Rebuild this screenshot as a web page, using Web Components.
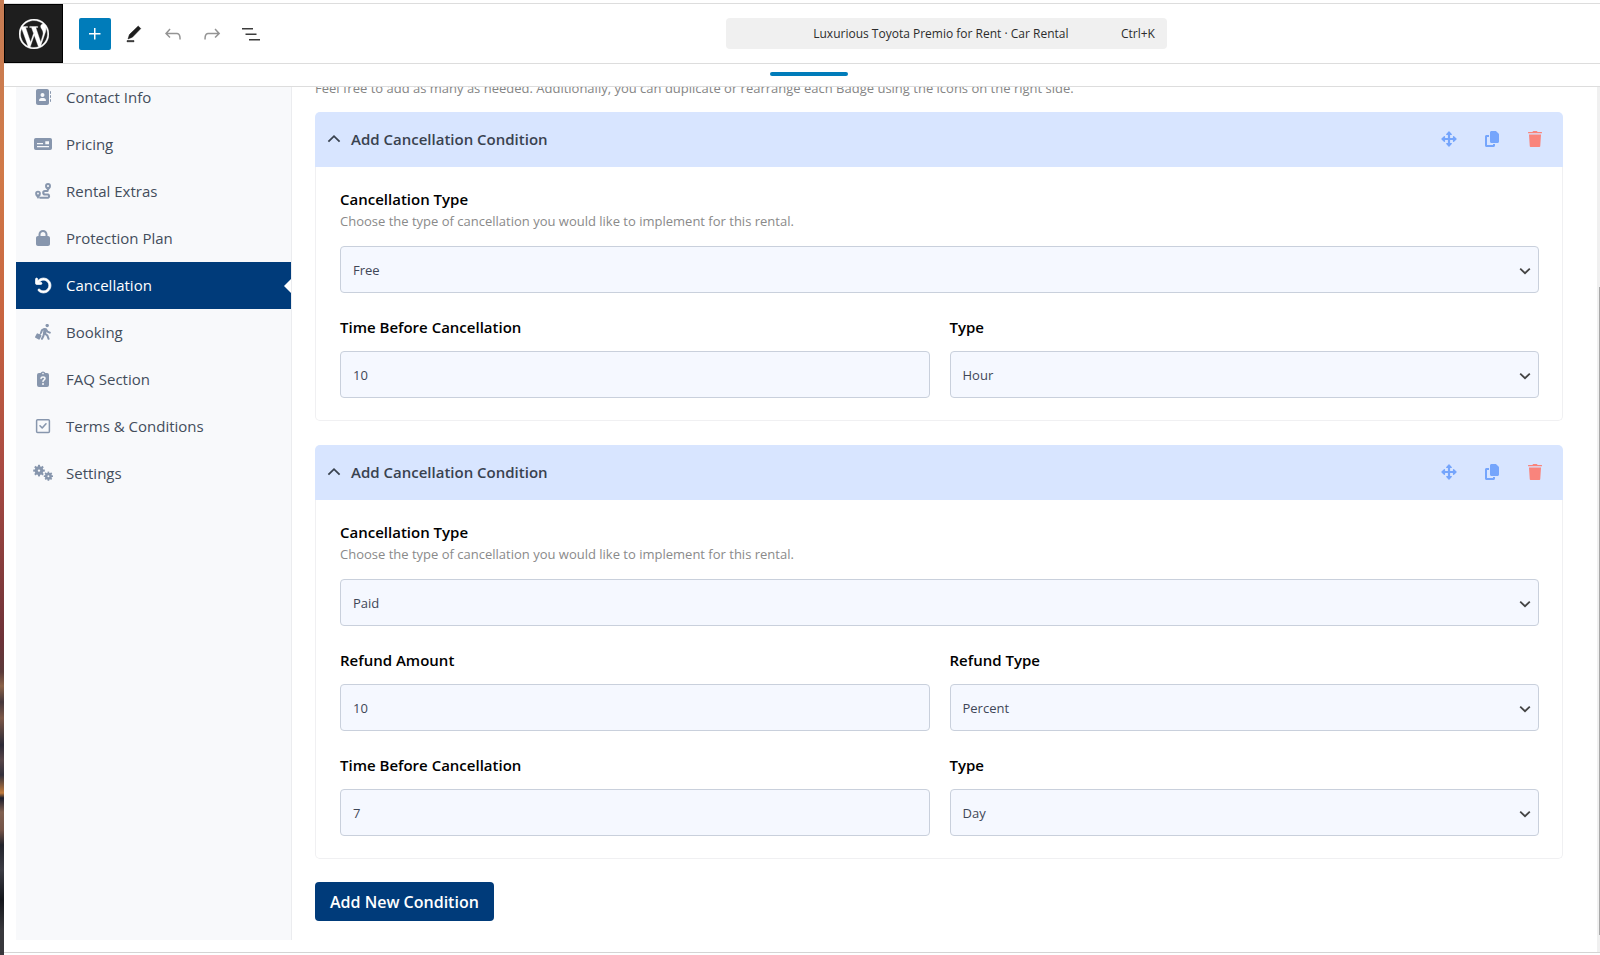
<!DOCTYPE html>
<html lang="en">
<head>
<meta charset="utf-8">
<title>Luxurious Toyota Premio for Rent</title>
<style>
  html, body { height: 100%; margin: 0; }
  body { font-family: "Open Sans", "Noto Sans", sans-serif; font-size: 13px; background: #fff; overflow: hidden; }
</style>
</head>
<body>
<editor-app>
  <editor-topbar slot="top" shortcut="Ctrl+K">Luxurious Toyota Premio for Rent · Car Rental</editor-topbar>
  <side-nav slot="nav">
    <nav-item icon="contact">Contact Info</nav-item>
    <nav-item icon="pricing">Pricing</nav-item>
    <nav-item icon="route">Rental Extras</nav-item>
    <nav-item icon="lock">Protection Plan</nav-item>
    <nav-item icon="undo" active>Cancellation</nav-item>
    <nav-item icon="walk">Booking</nav-item>
    <nav-item icon="faq">FAQ Section</nav-item>
    <nav-item icon="check">Terms &amp; Conditions</nav-item>
    <nav-item icon="gears">Settings</nav-item>
  </side-nav>
  <condition-list>
    <condition-card heading="Add Cancellation Condition">
      <form-field wide kind="select" label="Cancellation Type" value="Free" options="Free,Paid"
        hint="Choose the type of cancellation you would like to implement for this rental."></form-field>
      <form-field label="Time Before Cancellation" value="10"></form-field>
      <form-field kind="select" label="Type" value="Hour" options="Hour,Day"></form-field>
    </condition-card>
    <condition-card heading="Add Cancellation Condition">
      <form-field wide kind="select" label="Cancellation Type" value="Paid" options="Free,Paid"
        hint="Choose the type of cancellation you would like to implement for this rental."></form-field>
      <form-field label="Refund Amount" value="10"></form-field>
      <form-field kind="select" label="Refund Type" value="Percent" options="Percent,Fixed"></form-field>
      <form-field label="Time Before Cancellation" value="7"></form-field>
      <form-field kind="select" label="Type" value="Day" options="Hour,Day"></form-field>
    </condition-card>
  </condition-list>
</editor-app>

<script>
const svg = (box, size, body, extra = '') =>
  `<svg viewBox="${box}" width="${size}" height="${size}" aria-hidden="true" ${extra}>${body}</svg>`;

// Eight-toothed gear centred on cx, cy.
const gear = (cx, cy, r) => {
  let teeth = '';
  for (let a = 0; a < 360; a += 45)
    teeth += `<path d="M${cx} ${cy - r * .5}V${cy - r}" stroke="currentColor" stroke-width="${r * .36}" transform="rotate(${a} ${cx} ${cy})"/>`;
  return teeth + `<circle cx="${cx}" cy="${cy}" r="${r * .48}" fill="none" stroke="currentColor" stroke-width="${r * .54}"/>`;
};

const ICONS = {
  contact: svg('0 0 512 512', 16, '<path fill="currentColor" d="M96 0C60.7 0 32 28.7 32 64V448c0 35.3 28.7 64 64 64H384c35.3 0 64-28.7 64-64V64c0-35.3-28.7-64-64-64H96zM208 288h64c44.2 0 80 35.8 80 80c0 8.8-7.2 16-16 16H144c-8.8 0-16-7.2-16-16c0-44.2 35.8-80 80-80zm-32-96a64 64 0 1 1 128 0 64 64 0 1 1 -128 0zM512 80c0-8.8-7.2-16-16-16s-16 7.2-16 16v64c0 8.8 7.2 16 16 16s16-7.2 16-16V80zM496 192c-8.8 0-16 7.2-16 16v64c0 8.8 7.2 16 16 16s16-7.2 16-16V208c0-8.8-7.2-16-16-16zm16 144c0-8.8-7.2-16-16-16s-16 7.2-16 16v64c0 8.8 7.2 16 16 16s16-7.2 16-16V336z"/>'),
  pricing: svg('0 0 18 18', 18, '<path fill="currentColor" fill-rule="evenodd" d="M1.8 3H16.2A1.8 1.8 0 0 1 18 4.8V13.2A1.8 1.8 0 0 1 16.2 15H1.8A1.8 1.8 0 0 1 0 13.2V4.8A1.8 1.8 0 0 1 1.8 3ZM11.3 6.2V9.2H15V6.2ZM3 8V9.2H9V8ZM3 11V12.2H15V11Z"/>'),
  route: svg('0 0 512 512', 16, '<g fill="none" stroke="currentColor" stroke-width="62"><circle cx="416" cy="96" r="64"/><circle cx="96" cy="336" r="60"/><path stroke-width="68" stroke-linecap="round" d="M400 256H320a56 56 0 0 0 0 112H416a56 56 0 0 1 0 104H165"/></g><path fill="currentColor" d="M335 140L416 262 497 140 455 165H377ZM14 385L96 512 178 385 135 410H57Z"/>'),
  lock: svg('0 0 448 512', 16, '<path fill="currentColor" d="M144 144v48H304V144c0-44.2-35.8-80-80-80s-80 35.8-80 80zM80 192V144C80 64.5 144.5 0 224 0s144 64.5 144 144v48h16c35.3 0 64 28.7 64 64V448c0 35.3-28.7 64-64 64H64c-35.3 0-64-28.7-64-64V256c0-35.3 28.7-64 64-64H80z"/>'),
  undo: svg('0 0 512 512', 17, '<path fill="currentColor" stroke="currentColor" stroke-width="22" d="M125.7 160H176c17.7 0 32 14.3 32 32s-14.3 32-32 32H48c-17.7 0-32-14.3-32-32V64c0-17.7 14.3-32 32-32s32 14.3 32 32v51.2L97.6 97.6c87.5-87.5 229.3-87.5 316.8 0s87.5 229.3 0 316.8s-229.3 87.5-316.8 0c-12.5-12.5-12.5-32.8 0-45.3s32.8-12.5 45.3 0c62.5 62.5 163.8 62.5 226.3 0s62.5-163.8 0-226.3s-163.8-62.5-226.3 0L125.7 160z"/>'),
  walk: svg('0 0 16 16', 16, '<g fill="none" stroke="currentColor" stroke-linecap="round" stroke-linejoin="round"><path stroke-width="3.2" d="M10.2 5.9L9.6 8.8"/><path stroke-width="2" d="M9.8 9.4L12.4 11.6 13.6 14.8M9 9.6L8.4 12 7 14.8M9.4 5L7 6.2 6.2 8.4M11 5.4L12.4 7.6 14.8 8.6"/><path stroke-width="1.2" d="M6.2 8.6L4.6 11"/></g><circle cx="12.2" cy="1.6" r="1.7" fill="currentColor"/><rect x=".5" y="10" width="5.2" height="5" rx=".8" fill="currentColor" transform="rotate(28 3.2 12.7)"/>'),
  faq: svg('0 0 16 16', 16, '<path fill="currentColor" d="M4 2H5.6A2.6 2.6 0 0 1 10.4 2H12A2 2 0 0 1 14 4V14A2 2 0 0 1 12 16H4A2 2 0 0 1 2 14V4A2 2 0 0 1 4 2Z"/><circle cx="8" cy="2.6" r=".8" fill="#f8f9fb"/><path fill="none" stroke="#f8f9fb" stroke-width="1.5" stroke-linecap="round" d="M6 7.4C6.1 5.6 10 5.5 10 7.6 10 8.9 8 9 8 10.6"/><circle cx="8" cy="13" r="1" fill="#f8f9fb"/>'),
  check: svg('0 0 16 16', 16, '<g fill="none" stroke="currentColor" stroke-linecap="round" stroke-linejoin="round"><rect x="1.6" y="1.8" width="12.8" height="12.6" rx="1" stroke-width="1.5"/><path stroke-width="1.6" d="M5 7.8L7.2 10 11 5.8"/></g>'),
  gears: svg('0 0 20 16', 20, gear(6, 5.6, 5.8) + gear(15.4, 11.2, 4.6)),

  wordpress: svg('0 0 24 24', 30, '<path fill="#fff" d="M21.469 6.825c.84 1.537 1.318 3.3 1.318 5.175 0 3.979-2.156 7.456-5.363 9.325l3.295-9.527c.615-1.54.82-2.771.82-3.864 0-.405-.026-.78-.07-1.11m-7.981.105c.647-.03 1.232-.105 1.232-.105.582-.075.514-.93-.067-.899 0 0-1.755.135-2.88.135-1.064 0-2.85-.15-2.85-.15-.585-.03-.661.855-.075.885 0 0 .54.061 1.125.09l1.68 4.605-2.37 7.08L5.354 6.9c.649-.03 1.234-.1 1.234-.1.585-.075.516-.93-.065-.896 0 0-1.746.138-2.874.138-.2 0-.438-.008-.69-.015C4.911 3.15 8.235 1.215 12 1.215c2.809 0 5.365 1.072 7.286 2.833-.046-.003-.091-.009-.141-.009-1.06 0-1.812.923-1.812 1.914 0 .89.513 1.643 1.06 2.531.411.72.89 1.643.89 2.977 0 .915-.354 1.994-.821 3.479l-1.075 3.585-3.9-11.61.001.014zM12 22.784c-1.059 0-2.081-.153-3.048-.437l3.237-9.406 3.315 9.087c.024.053.05.101.078.149-1.12.393-2.325.609-3.582.609M1.211 12c0-1.564.336-3.05.935-4.39L7.29 21.709C3.694 19.96 1.212 16.271 1.211 12M12 0C5.385 0 0 5.385 0 12s5.385 12 12 12 12-5.385 12-12S18.615 0 12 0" stroke="#fff" stroke-width=".3"/>'),
  plus: svg('0 0 24 24', 24, '<path fill="#fff" d="M11 12.5V17.5H12.5V12.5H17.5V11H12.5V6H11V11H6V12.5H11Z"/>'),
  pencil: svg('0 0 24 24', 24, '<path fill="#1e1e1e" stroke="#1e1e1e" stroke-width=".5" d="M18.8 6.6L16.2 4 7.4 12.6 6 17 10.4 15.2ZM12 18.6H5V19.8H12Z"/>'),
  back: svg('0 0 24 24', 24, '<path fill="#949494" d="M18.3 11.7c-.6-.6-1.4-.9-2.3-.9H6.7l2.9-3.3-1.1-1-4.5 5L8.5 16l1-1-2.7-2.7H16c.5 0 .9.2 1.3.5 1 1 1 3.4 1 4.5v.3h1.5v-.2c0-1.5 0-4.3-1.5-5.7z"/>'),
  forward: svg('0 0 24 24', 24, '<path fill="#949494" d="M15.6 6.5l-1.1 1 2.9 3.3H8c-.9 0-1.7.3-2.3.9-1.4 1.5-1.4 4.2-1.4 5.6v.2h1.5v-.3c0-1.1 0-3.5 1-4.5.3-.3.7-.5 1.3-.5h9.2L14.5 15l1.1 1.1 4.6-4.6-4.6-5z"/>'),
  outline: svg('0 0 24 24', 24, '<path fill="#3c3c3c" d="M3 6h11v1.4H3V6Zm3.5 5.5h11v1.4h-11v-1.4ZM21 17H10v1.4h11V17Z"/>'),

  move: svg('0 0 16 16', 16, '<path stroke="currentColor" stroke-width="2.2" d="M8 3V13M3 8H13"/><path fill="currentColor" stroke="currentColor" stroke-width="1.4" stroke-linejoin="round" d="M8 1L10.2 3.4H5.8ZM8 15L10.2 12.6H5.8ZM1 8L3.4 5.8V10.2ZM15 8L12.6 5.8V10.2Z"/>'),
  copy: svg('0 0 448 512', 16, '<path fill="currentColor" d="M208 0H332.1c12.7 0 24.9 5.1 33.9 14.1l67.9 67.9c9 9 14.1 21.2 14.1 33.9V336c0 26.5-21.5 48-48 48H208c-26.5 0-48-21.5-48-48V48c0-26.5 21.5-48 48-48zM48 128h80v64H64V448H256V416h64v48c0 26.5-21.5 48-48 48H48c-26.5 0-48-21.5-48-48V176c0-26.5 21.5-48 48-48z"/>'),
  trash: svg('0 0 448 512', 16, '<path fill="currentColor" d="M150 14L142 28H16C7 28 0 35 0 44V72H448V44C448 35 441 28 432 28H306L298 14C294 6 286 0 276 0H172C162 0 154 6 150 14ZM416 112H32L56 480C57 498 72 512 90 512H358C376 512 391 498 392 480Z"/>'),
  up: svg('0 0 14 14', 14, '<path fill="none" stroke="#39424f" stroke-width="1.8" d="M1.4 9.6L7 4.2 12.6 9.6"/>'),
  down: svg('0 0 12 12', 12, '<path fill="none" stroke="#444" stroke-width="1.8" d="M1.2 3.6L6 8.2 10.8 3.6"/>')
};

const define = (name, setup) => customElements.define(name, class extends HTMLElement {
  connectedCallback() {
    if (!this.shadowRoot) this.attachShadow({ mode: 'open' }).innerHTML = setup(this);
  }
});

define('editor-app', () => `
  <style>
    :host { display: grid; grid-template-columns: 4px minmax(0, 1fr); min-height: 100%; }
    .desktop { background:
      linear-gradient(#c67c54, #d17a48 170px, #c86440 320px, #a94a42 470px, #6d3238 640px, #5b3a3a 672px,
        #8a6248 686px, #46383c 702px, #7c5848 718px, #2c2a36 745px, #574548 760px, #33303c 775px,
        #c27c3e 793px, #1c1e2c 798px, #806050 812px, #745448 830px, #23242c 845px, #3c3c44 870px, #14161c 900px, #38383c 930px); }
    .window { display: flex; flex-direction: column; margin-top: 3px; border-top: 1px solid #ddd; }
    .tabs { box-sizing: border-box; height: 23px; padding: 8px 0 0 14px; border-bottom: 1px solid #ddd; }
    .tab { width: 78px; height: 4px; margin: 0 auto; border-radius: 2px; background: #007cba; }
    .scroller { display: grid; grid-template-columns: 276px minmax(0, 1fr) 3px; overflow: hidden; padding-left: 12px; border-bottom: 1px solid #d4d4d4; }
    .nav { display: grid; margin-bottom: 12px; }
    .main { margin-bottom: 31px; }
    .track { display: flex; justify-content: flex-end; background: #f0f0f0; }
    .thumb { width: 1px; margin: 200px 0 17px; background: #a8a8a8; }
  </style>
  <div class="desktop"></div>
  <div class="window">
    <slot name="top"></slot>
    <div class="tabs"><div class="tab"></div></div>
    <div class="scroller">
      <div class="nav"><slot name="nav"></slot></div>
      <div class="main"><slot></slot></div>
      <div class="track"><div class="thumb"></div></div>
    </div>
  </div>`);

define('editor-topbar', el => `
  <style>
    :host { display: flex; align-items: center; height: 59px; border-bottom: 1px solid #ddd; color: #2c2c2c; }
    button { font: inherit; color: inherit; border: 0; padding: 0; background: none; display: grid; place-items: center; }
    .tools { flex: 5 1 0; display: flex; align-items: center; gap: 7px; }
    .tools button { width: 32px; height: 32px; }
    .home { width: 59px; height: 59px; margin-right: 9px; display: grid; place-items: center; background: #1e1e1e; border: 1px solid #000; box-sizing: border-box; }
    .tools .add { background: #007cba; border-radius: 2px; }
    .search { flex: 0 0 441px; height: 31px; box-sizing: border-box; padding: 0 12px; display: grid; grid-template-columns: 1fr auto;
      align-items: center; background: #f0f0f0; border-radius: 4px; font-size: 12px; line-height: 20px; }
    .name { padding-left: 23px; }
    .rest { flex: 3 1 0; }
  </style>
  <div class="tools">
    <a class="home" href="#" aria-label="View posts">${ICONS.wordpress}</a>
    <button class="add" aria-label="Add block">${ICONS.plus}</button>
    <button aria-label="Tools">${ICONS.pencil}</button>
    <button aria-label="Undo">${ICONS.back}</button>
    <button aria-label="Redo">${ICONS.forward}</button>
    <button aria-label="Document overview">${ICONS.outline}</button>
  </div>
  <button class="search"><span class="name"><slot></slot></span><span>${el.getAttribute('shortcut')}</span></button>
  <div class="rest"></div>`);

define('side-nav', () => `
  <style>
    :host { display: block; background: #f8f9fb; border-right: 1px solid #ebecef; }
    nav { margin-top: -13px; }
  </style>
  <nav aria-label="Rental sections"><slot></slot></nav>`);

define('nav-item', el => `
  <style>
    :host { display: block; }
    a { position: relative; box-sizing: border-box; display: grid; grid-template-columns: 20px 1fr; gap: 13px; align-items: center; height: 47px;
      padding: 0 0 1px 17px; color: #434d5b; font-size: 15px; line-height: 24px; text-decoration: none; }
    .icon { display: grid; place-items: center; color: #8796ad; }
    :host([active]) a { background: #003b7a; color: #fff; }
    :host([active]) .icon { color: #fff; }
    :host([active]) a::after { content: ""; position: absolute; right: 0; top: 50%; margin-top: -7px;
      border: 7px solid transparent; border-left-width: 0; border-right-color: #fff; }
  </style>
  <a href="#" ${el.hasAttribute('active') ? 'aria-current="page"' : ''}><span class="icon">${ICONS[el.getAttribute('icon')]}</span><span><slot></slot></span></a>`);

define('condition-list', () => `
  <style>
    :host { display: block; padding: 0 34px 0 23px; }
    p { margin: -9px 0 14px; line-height: 20px; color: #858585; }
    .cards { display: grid; gap: 24px; }
    button { margin-top: 23px; height: 39px; padding: 0 15px; border: 0; border-radius: 4px; background: #003b7a; color: #fff;
      font: 600 16px/24px "Open Sans", "Noto Sans", sans-serif; }
  </style>
  <p>Feel free to add as many as needed. Additionally, you can duplicate or rearrange each Badge using the icons on the right side.</p>
  <div class="cards"><slot></slot></div>
  <button>Add New Condition</button>`);

define('condition-card', el => `
  <style>
    :host { display: block; }
    header { display: flex; align-items: center; box-sizing: border-box; height: 55px; padding: 0 20px 2px 11px; background: #d8e5ff; border-radius: 5px 5px 0 0; }
    h3 { flex: 1; margin: 0 0 0 9px; font-size: 15px; line-height: 24px; font-weight: 600; color: #39424f; }
    button { display: grid; place-items: center; border: 0; padding: 0; background: none; color: #75a5fc; width: 16px; height: 16px; }
    .actions { display: flex; gap: 27px; }
    .actions .remove { color: #f9847c; }
    .fields { display: grid; grid-template-columns: 1fr 1fr; gap: 22px 20px; padding: 20px 23px 22px 24px; border: 1px solid #f0f0f2;
      border-top: 0; border-radius: 0 0 5px 5px; }
    ::slotted([wide]) { grid-column: 1 / -1; }
  </style>
  <header>
    <button aria-label="Collapse">${ICONS.up}</button>
    <h3>${el.getAttribute('heading')}</h3>
    <div class="actions">
      <button aria-label="Move">${ICONS.move}</button>
      <button aria-label="Duplicate">${ICONS.copy}</button>
      <button class="remove" aria-label="Delete">${ICONS.trash}</button>
    </div>
  </header>
  <div class="fields"><slot></slot></div>`);

define('form-field', el => {
  const value = el.getAttribute('value');
  const hint = el.getAttribute('hint');
  const control = el.getAttribute('kind') === 'select'
    ? `<select id="control">${el.getAttribute('options').split(',').map(o => `<option${o === value ? ' selected' : ''}>${o}</option>`).join('')}</select><span class="arrow">${ICONS.down}</span>`
    : `<input id="control" type="text" value="${value}">`;
  return `
  <style>
    :host { display: block; }
    label { display: block; font-size: 15px; line-height: 24px; font-weight: 600; color: #000; }
    p { margin: 0; line-height: 20px; color: #8a8a8a; }
    .control { position: relative; display: grid; margin-top: ${hint ? 15 : 12}px; }
    input, select { box-sizing: border-box; width: 100%; height: 47px; margin: 0; padding: 0 12px; appearance: none;
      border: 1px solid #c9d0dc; border-radius: 4px; background: #f5f8ff; color: #3f4757; font: inherit; }
    .arrow { position: absolute; right: 8px; top: 19px; display: grid; pointer-events: none; }
  </style>
  <label for="control">${el.getAttribute('label')}</label>
  ${hint ? `<p>${hint}</p>` : ''}
  <div class="control">${control}</div>`;
});
</script>
</body>
</html>
